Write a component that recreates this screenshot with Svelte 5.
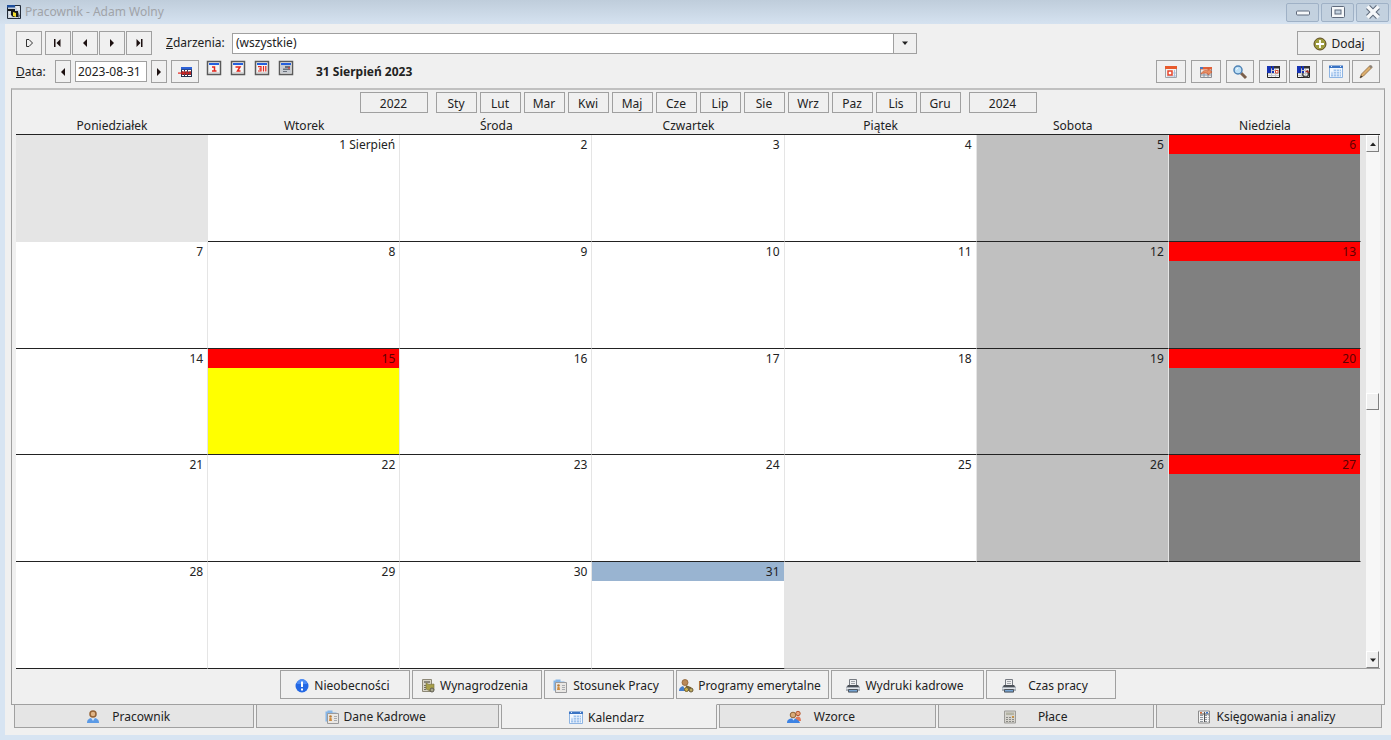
<script>
	const months = ['Sty', 'Lut', 'Mar', 'Kwi', 'Maj', 'Cze', 'Lip', 'Sie', 'Wrz', 'Paz', 'Lis', 'Gru'];
	const weekdays = ['Poniedziałek', 'Wtorek', 'Środa', 'Czwartek', 'Piątek', 'Sobota', 'Niedziela'];
	const holidays = [15];

	// august 2023 starts on a tuesday
	const firstOffset = 1;
	const daysInMonth = 31;

	let selected = $state(31);
	let date = $state('2023-08-31');
	let activeTab = $state('Kalendarz');

	const weeks = Array.from({ length: 5 }, (_, w) =>
		Array.from({ length: 7 }, (_, d) => {
			const day = w * 7 + d - firstOffset + 1;
			return day < 1 || day > daysInMonth ? null : day;
		})
	);

	const nav = [
		{ icon: 'outline', label: 'Bieżący' },
		{ icon: 'first', label: 'Pierwszy' },
		{ icon: 'left', label: 'Poprzedni' },
		{ icon: 'right', label: 'Następny' },
		{ icon: 'last', label: 'Ostatni' }
	];

	const views = [
		{ icon: 'view1', label: 'Dzień' },
		{ icon: 'view7', label: 'Tydzień' },
		{ icon: 'view31', label: 'Miesiąc' },
		{ icon: 'viewList', label: 'Lista' }
	];

	const tools = [
		{ groups: ['calRed'], wide: true },
		{ groups: ['calCross'], wide: true },
		{ groups: ['search'] },
		{ groups: ['gridInfo', 'gridMove'] },
		{ groups: ['calendar', 'pencil'] }
	];

	const actions = [
		{ label: 'Nieobecności', icon: 'alert', text: 76, width: 130 },
		{ label: 'Wynagrodzenia', icon: 'money', text: 88, width: 130 },
		{ label: 'Stosunek Pracy', icon: 'card', text: 88, width: 130 },
		{ label: 'Programy emerytalne', icon: 'pension', text: 0, width: 153 },
		{ label: 'Wydruki kadrowe', icon: 'printer', text: 98, width: 153 },
		{ label: 'Czas pracy', icon: 'printer', text: 74, width: 130 }
	];

	const tabs = [
		{ label: 'Pracownik', icon: 'person', text: 72, grow: 241 },
		{ label: 'Dane Kadrowe', icon: 'card', text: 0, grow: 243 },
		{ label: 'Kalendarz', icon: 'calendar', text: 0, grow: 216 },
		{ label: 'Wzorce', icon: 'people', text: 57, grow: 216 },
		{ label: 'Płace', icon: 'calc', text: 62, grow: 216 },
		{ label: 'Księgowania i analizy', icon: 'report', text: 0, grow: 226 }
	];

	function dayClass(day, col) {
		if (day === null) return 'empty';
		if (day === selected) return 'selected';
		if (holidays.includes(day)) return 'holiday';
		if (col === 6) return 'sunday';
		if (col === 5) return 'saturday';
		return '';
	}
</script>

{#snippet icon(name)}
	<svg class="icon" viewBox="0 0 16 16" width="16" height="16" aria-hidden="true">
		{#if name === 'outline'}
			<path d="M5.500 4.500h2.500l3.500 3.500-3.500 3.500H5.500z" fill="none" stroke="#333" />
		{:else if name === 'first'}
			<path d="M4 4h1.500v8H4zM10.500 4v8L6.500 8z" fill="#1c1010" />
		{:else if name === 'left'}
			<path d="M10 4v8L6 8z" fill="#1c1010" />
		{:else if name === 'right'}
			<path d="M6 4v8l4-4z" fill="#1c1010" />
		{:else if name === 'last'}
			<path d="M10 4h1.500v8h-1.500zM5.500 4v8l4-4z" fill="#1c1010" />
		{:else if name === 'up'}
			<path d="M5 10h6L8 6.500z" fill="#222" />
		{:else if name === 'down'}
			<path d="M5 6.500h6L8 10z" fill="#222" />
		{:else if name === 'app'}
			<path d="M1.500 1.500h13v13h-13z" fill="#c9d2dc" stroke="#222b38" />
			<path d="M1 1h8v2.500H1z" fill="#1f4f9c" />
			<path d="M2 5h7v2h3v6H7l-2-2V7H2z" fill="#16181c" />
			<path d="M7 8l3 1v4l-3-1z" fill="#f2dd2c" />
			<path d="M10 3h3M11 5h3M3 9h1M3 12h2" stroke="#fff" />
			<path d="M12 8l2 4-2 2z" fill="#5b6673" />
		{:else if name === 'today'}
			<path d="M4 3h11v10H4z" fill="#26324f" />
			<path d="M4 3h11v2.500H4z" fill="#2d62d8" />
			<path d="M5 6h2v1.500H5zM8 6h2v1.500H8zM11 6h3v1.500h-3zM5 11h2v1H5zM8 11h2v1H8zM11 11h3v1h-3z" fill="#fff" />
			<path d="M1 8.500h13v1.200H1z" fill="#e8231a" />
			<path d="M5 7l3 4M8 7l-3 4M10 7v4M13 7v4" stroke="#e8231a" />
		{:else if name.startsWith('view')}
			<path d="M1.500 1.500h13v13h-13z" fill="#f4f4f4" stroke="#5a5a5a" stroke-width="1.500" />
			<path d="M3 3h10v2H3z" fill="#2560dd" />
			<path d="M3 13h10" stroke="#b9b9b9" />
			{#if name === 'view1'}
				<path d="M6 7h2.500v4M6 11h4.500" fill="none" stroke="#e3261c" stroke-width="1.500" />
			{:else if name === 'view7'}
				<path d="M5.500 7h4.500L7.500 11h3" fill="none" stroke="#e3261c" stroke-width="1.500" />
			{:else if name === 'view31'}
				<path d="M4 6.700h3v4.300H4M5 9h2M9.500 6v5.500M11.800 6v5.500" fill="none" stroke="#e3261c" stroke-width="1.200" />
			{:else}
				<path d="M3 5h10v8H3z" fill="#c8ccd2" />
				<path d="M7 6h5v2H7zM5 8.500h7V10H5zM5 11h4v1H5z" fill="#6a717b" />
				<path d="M10 7.500h2v1h-2z" fill="#e3261c" />
			{/if}
		{:else if name === 'calRed'}
			<path d="M2.500 2.500h11v11h-11z" fill="#f5f4f2" stroke="#a0a4aa" />
			<path d="M2 2h12v3H2z" fill="#e85a2c" />
			<path d="M11.500 6v7M4 12h9M10 9h3" stroke="#aebfdc" />
			<path d="M5 7h4v4H5z" fill="#fff" stroke="#e8452c" stroke-width="1.500" />
		{:else if name === 'calCross'}
			<path d="M2.500 3.500h11v10h-11z" fill="#eeeae5" stroke="#8c8f96" />
			<path d="M2 3h12v2.500H2z" fill="#e06038" />
			<path d="M2 3h3v2H2z" fill="#4a79c0" />
			<path d="M3 11h10M6 9v4M10 9v4" stroke="#8794a8" />
			<path d="M3 10c2-4 5-4 7-3V4.500L14 8l-4 3V9.500c-3-1-5-.5-7 .5z" fill="#e99066" stroke="#c5532b" stroke-width=".7" />
		{:else if name === 'search'}
			<path d="M9 9l5 5" stroke="#7b604c" stroke-width="3" />
			<circle cx="6" cy="6" r="4" fill="#bfe0f6" stroke="#4f83b5" stroke-width="1.500" />
			<path d="M4 5.500l2-1.500" stroke="#fff" />
		{:else if name === 'gridInfo' || name === 'gridMove'}
			<path d="M2.500 2.500h12v11h-12z" fill="#f2f2f2" stroke="#222" />
			<path d="M6 6.500h8M3 9.500h11M3 11.500h11M6.500 5v8M10.500 5v8" stroke="#c3c6ca" />
			<path d="M2 2h13v2.500H2z" fill="#333" />
			<path d="M2 2h4v7H2zM7 2h2v4H7zM7 7h2v2H7z" fill="#1632b4" />
			{#if name === 'gridInfo'}
				<path d="M10.500 6.500h2.500v2.500h-2.500z" fill="#fff" stroke="#d9482c" />
			{:else}
				<path d="M8 9c-1 3 1 4 3 4s3-2 2-5" fill="none" stroke="#444" stroke-width="1.500" />
				<path d="M10 8l2.500-2L15 9z" fill="#a32b22" />
			{/if}
		{:else if name === 'calendar'}
			<path d="M1.500 2.500h13v11h-13z" fill="#f3f8fe" stroke="#8eb4e2" />
			<path d="M1 1.500h14v2.500H1z" fill="#3b74c4" />
			<path d="M3 2.500h1M12 2.500h1" stroke="#dceaff" />
			<path d="M5 5.500h8v7H3v-4h2z" fill="#9fc2ec" />
			<path d="M3 7.500h11M3 10h11M5.500 5v8M8.500 5v8M11.500 5v8" stroke="#e4effd" stroke-width=".8" />
		{:else if name === 'pencil'}
			<path d="M2 14l1.500-4 8.500-8.500 2 2L5.500 12z" fill="#dcae6c" stroke="#8a673f" stroke-width=".8" />
			<path d="M2 14l1-2.500 1.500 1.200z" fill="#333" />
			<path d="M11 2.500l2-1.500 1.500 1.500-1.500 2z" fill="#8a8178" />
		{:else if name === 'add'}
			<circle cx="8" cy="8" r="6" fill="#9d9a3c" stroke="#5d4a24" />
			<path d="M8 4v8M4 8h8" stroke="#fff" stroke-width="1.800" />
		{:else if name === 'alert'}
			<circle cx="8" cy="8" r="6.500" fill="#2468e4" />
			<path d="M3 6a5 5 0 0 1 10 0z" fill="#4d8cf5" />
			<path d="M8 3.500v5.500M8 10.500v2" stroke="#fff" stroke-width="2" />
		{:else if name === 'money'}
			<path d="M2.500 1.500h9v12h-9z" fill="#d8d4c8" stroke="#8d8877" />
			<path d="M4 3h6v2H4z" fill="#8b877c" />
			<path d="M4 7h2v1H4zM4 9h2v1H4zM4 11h2v1H4z" fill="#716d60" />
			<path d="M6 5l3 1.500 5-.5v6l-4 1-4-2z" fill="#a9a04a" stroke="#77713c" stroke-width=".6" />
			<circle cx="12" cy="12" r="2" fill="#aaa98f" stroke="#5d5b50" />
		{:else if name === 'card'}
			<path d="M1.500 2.500h2v-1h5v2h4v9h-11z" fill="#85b6e8" />
			<path d="M3.500 4.500h11v10h-11z" fill="#e9e7e4" stroke="#9a9a9c" />
			<circle cx="6.500" cy="7.500" r="1.300" fill="#bb7b32" />
			<path d="M5 12l.5-3h2l.5 3z" fill="#d08b3c" />
			<path d="M10 7.500h3M10 9.500h3M10 11.500h3" stroke="#a8abb0" />
		{:else if name === 'pension'}
			<circle cx="7" cy="4.500" r="3" fill="#bb8a58" stroke="#8d6033" stroke-width=".8" />
			<path d="M1 13c0-3 2-5 6-5s5 2 5 5z" fill="#477fca" />
			<path d="M5 8h4l-2 3z" fill="#f4e9d8" />
			<circle cx="8.500" cy="11.500" r="2" fill="#c8b04b" stroke="#77602a" />
			<circle cx="13" cy="12" r="2" fill="#bdaa62" stroke="#675735" />
			<path d="M8 8l5 2" stroke="#77602a" stroke-width="1.500" />
		{:else if name === 'printer'}
			<path d="M4.500 1.500h7v6h-7z" fill="#eeeeef" stroke="#777b82" />
			<path d="M6 3.500h4M6 5.500h4" stroke="#a0a3a8" />
			<path d="M3 7h10l2 2v4h-2v1.500H3V13H1V9z" fill="#a9afb7" />
			<path d="M3 7h10l1 2H2z" fill="#4b5057" />
			<path d="M1.500 10.500h13" stroke="#e3e6ea" />
			<path d="M3.500 11.500h9v2.500h-9z" fill="#75a4d4" stroke="#50565e" />
		{:else if name === 'person'}
			<path d="M2 14c0-3 1.500-5 6-5s6 2 6 5z" fill="#5b9ae6" />
			<path d="M6 9h4l-2 3z" fill="#d5e5f8" />
			<circle cx="8" cy="5" r="3" fill="#dfb486" stroke="#936236" stroke-width="1.500" />
		{:else if name === 'people'}
			<circle cx="12" cy="4.500" r="2.200" fill="#eaa379" stroke="#b4562f" />
			<path d="M9 12c0-3 1-4.500 3-4.500s3 2 3 4.500z" fill="#df795a" />
			<circle cx="7" cy="6" r="2.800" fill="#d9aa77" stroke="#906336" />
			<path d="M1 14c0-3 1.500-4.500 5.500-4.500S13 11 14 14z" fill="#3d83e4" />
			<path d="M6 9.500h3l-1.500 2z" fill="#dce9fa" />
		{:else if name === 'calc'}
			<path d="M2.500 2h11v12h-11z" fill="#d6d4ce" stroke="#9d9c98" />
			<path d="M4 3.500h8v2.500H4z" fill="#b3b3a4" />
			<path d="M4 8.500h8M4 10.500h8M4 12.500h8" stroke="#8a8a86" stroke-dasharray="2 1" />
			<path d="M10 7h2v1.500h-2z" fill="#d69638" />
		{:else if name === 'report'}
			<path d="M2.500 2h11v12h-11z" fill="#f4f4f4" stroke="#8b8b8b" />
			<path d="M4 6.500h8.500M4 8.500h8.500M4 10.500h8.500M4 12.500h8.500" stroke="#8f959d" stroke-dasharray="3 1" />
			<path d="M8.500 3v10M4 5h9" stroke="#555" />
			<path d="M4 3h2v1.500H4z" fill="#d66a35" />
			<path d="M10 3h2v1.500h-2z" fill="#3d76cc" />
		{/if}
	</svg>
{/snippet}

<div class="window">
	<header class="titlebar">
		{@render icon('app')}
		<span class="title">Pracownik - Adam Wolny</span>
		<button class="win" aria-label="Minimalizuj">
			<svg viewBox="0 0 16 16" width="16" height="16"><rect x="1.500" y="7" width="13" height="4" rx="1" fill="#f6f8fa" stroke="#5f6a7c" /></svg>
		</button>
		<button class="win" aria-label="Maksymalizuj">
			<svg viewBox="0 0 16 16" width="16" height="16">
				<rect x="1.500" y="2.500" width="13" height="11" rx="1" fill="#f6f8fa" stroke="#5f6a7c" />
				<rect x="5" y="6" width="6" height="4" fill="#c3d1df" stroke="#5f6a7c" />
			</svg>
		</button>
		<button class="win" aria-label="Zamknij">
			<svg viewBox="0 0 16 16" width="16" height="16">
				<path d="M3 3l10 10M13 3L3 13" stroke="#5f6a7c" stroke-width="5.500" />
				<path d="M2.500 2.500l11 11M13.500 2.500l-11 11" stroke="#f6f8fa" stroke-width="3.500" />
			</svg>
		</button>
	</header>

	<main>
		<div class="bar top">
			<div class="nav">
				{#each nav as item}
					<button aria-label={item.label}>{@render icon(item.icon)}</button>
				{/each}
			</div>
			<label for="events"><u>Z</u>darzenia:</label>
			<div class="combo">
				<select id="events">
					<option>(wszystkie)</option>
				</select>
				<span class="arrow">{@render icon('down')}</span>
			</div>
			<button class="add">{@render icon('add')} Dodaj</button>
		</div>

		<div class="bar second">
			<label for="date"><u>D</u>ata:</label>
			<button class="step" aria-label="Poprzedni dzień">{@render icon('left')}</button>
			<input id="date" type="text" bind:value={date} />
			<button class="step" aria-label="Następny dzień">{@render icon('right')}</button>
			<button class="tool" aria-label="Dzisiaj">{@render icon('today')}</button>
			<div class="views">
				{#each views as view}
					<button aria-label={view.label}>{@render icon(view.icon)}</button>
				{/each}
			</div>
			<strong>31 Sierpień 2023</strong>
			<div class="tools">
				{#each tools as tool}
					<div class="group">
						{#each tool.groups as name}
							<button class="tool" class:wide={tool.wide} aria-label={name}>{@render icon(name)}</button>
						{/each}
					</div>
				{/each}
			</div>
		</div>

		<section class="panel">
			<div class="months">
				<button class="year">2022</button>
				<div class="month-list">
					{#each months as month}
						<button>{month}</button>
					{/each}
				</div>
				<button class="year">2024</button>
			</div>

			<div class="calendar">
				<table>
					<thead>
						<tr>
							{#each weekdays as name}
								<th>{name}</th>
							{/each}
						</tr>
					</thead>
					<tbody>
						{#each weeks as week}
							<tr>
								{#each week as day, col}
									<td class={dayClass(day, col)}>
										{#if day}
											<div class="day">{day}{day === 1 ? ' Sierpień' : ''}</div>
										{/if}
									</td>
								{/each}
							</tr>
						{/each}
					</tbody>
				</table>
				<div class="scroll">
					<div class="track">
						<button aria-label="W górę">{@render icon('up')}</button>
						<div class="space"></div>
						<div class="thumb"></div>
						<div class="space"></div>
						<button aria-label="W dół">{@render icon('down')}</button>
					</div>
				</div>
			</div>

			<div class="actions">
				{#each actions as action}
					<button style="width: {action.width}px">
						{@render icon(action.icon)}
						<span style="min-width: {action.text}px">{action.label}</span>
					</button>
				{/each}
			</div>
		</section>

		<nav class="tabs">
			{#each tabs as tab}
				<button
					class:active={activeTab === tab.label}
					style="flex-grow: {tab.grow}"
					onclick={() => (activeTab = tab.label)}
				>
					{@render icon(tab.icon)}
					<span style="min-width: {tab.text}px">{tab.label}</span>
				</button>
			{/each}
		</nav>
	</main>
</div>

<style>
	:global(body) {
		margin: 0;
		background: #d7e4f2;
	}

	.window {
		box-sizing: border-box;
		min-height: 100vh;
		padding: 0 0 5px 5px;
		background: #d7e4f2;
		color: #222;
		font-family: 'Noto Sans', 'Open Sans', sans-serif;
		font-size: 12px;
		line-height: 16px;
	}

	.window * {
		box-sizing: border-box;
	}

	button,
	input,
	select {
		margin: 0;
		padding: 0;
		border: 1px solid #a0a0a0;
		border-radius: 0;
		background: #f0f0f0;
		color: inherit;
		font: inherit;
	}

	button {
		display: flex;
		align-items: center;
		justify-content: center;
	}

	.icon {
		display: block;
		flex: none;
	}

	.titlebar {
		display: flex;
		align-items: center;
		gap: 2px;
		height: 24px;
		margin-left: -5px;
		padding: 0 2px 0 6px;
		background: linear-gradient(#bfcddb, #d5e2f0);
	}

	.title {
		flex: 1;
		padding-left: 1px;
		color: #a0a3a8;
	}

	.win {
		width: 33px;
		height: 19px;
		border-color: #9fb1c6;
		border-radius: 2px;
		background: #c3d1df;
	}

	main {
		padding: 7px 6px;
		background: #f0f0f0;
	}

	.bar {
		display: flex;
		align-items: center;
		margin: 0 5px 5px;
	}

	.top {
		height: 24px;
	}

	.second {
		height: 23px;
	}

	.nav {
		display: flex;
		gap: 1px;
	}

	.nav button {
		width: 26px;
		height: 24px;
	}

	.nav button:first-child {
		margin-right: 2px;
	}

	.top label {
		width: 66px;
		margin-left: 14px;
	}

	.combo {
		position: relative;
		flex: 1;
		margin-right: 380px;
	}

	select {
		display: block;
		width: 100%;
		height: 21px;
		padding-left: 3px;
		appearance: none;
		background: #fff;
	}

	.arrow {
		position: absolute;
		top: 0;
		right: 0;
		display: flex;
		align-items: center;
		justify-content: center;
		width: 24px;
		height: 21px;
		border: 1px solid #a0a0a0;
		background: #f0f0f0;
		pointer-events: none;
	}

	.add {
		gap: 3px;
		width: 83px;
		height: 24px;
		padding-top: 1px;
	}

	.second label {
		width: 39px;
	}

	.step {
		width: 16px;
		height: 23px;
	}

	input {
		width: 72px;
		height: 21px;
		margin: 0 4px;
		padding-left: 2px;
		background: #fff;
	}

	.tool {
		width: 28px;
		height: 23px;
	}

	.tool.wide {
		width: 30px;
	}

	.step + .tool {
		margin-left: 4px;
	}

	.views {
		display: flex;
		gap: 8px;
		align-self: flex-start;
		margin: 0 22px 0 7px;
	}

	.views button {
		border: 0;
	}

	.tools {
		display: flex;
		gap: 5px;
		margin-left: auto;
	}

	.group {
		display: flex;
		gap: 2px;
	}

	.panel {
		padding: 2px 4px 5px;
		border: 1px solid #a0a0a0;
		border-top: 2px solid #c0c0c0;
	}

	.months {
		display: flex;
		justify-content: center;
		gap: 8px;
		margin-bottom: 4px;
	}

	.months button {
		width: 41px;
		height: 21px;
		padding-top: 2px;
	}

	.months .year {
		width: 68px;
	}

	.month-list {
		display: flex;
		gap: 3px;
	}

	.calendar {
		display: grid;
		grid-template-columns: 1fr auto;
	}

	table {
		width: 100%;
		height: calc(100vh - 188px);
		min-height: 300px;
		table-layout: fixed;
		border-collapse: separate;
		border-spacing: 0;
	}

	th {
		height: 18px;
		padding: 1px 0 0;
		border-bottom: 1px solid #222;
		font-weight: normal;
	}

	td {
		padding: 0;
		border-right: 1px solid #e5e5e5;
		border-bottom: 1px solid #222;
		background: #fff;
		vertical-align: top;
	}

	.day {
		height: 19px;
		padding: 2px 4px 0 0;
		text-align: right;
	}

	.empty {
		border-color: #e5e5e5;
		background: #e5e5e5;
	}

	tr:last-child .empty {
		border-right: 0;
		border-bottom-color: #a0a0a0;
	}

	.saturday {
		background: #c0c0c0;
	}

	.sunday {
		background: #808080;
	}

	.holiday {
		background: #ff0;
	}

	.sunday .day,
	.holiday .day {
		background: #f00;
		color: #600000;
	}

	.selected .day {
		background: #99b4d1;
	}

	.scroll {
		display: flex;
		margin-top: 17px;
		padding-left: 5px;
		border-top: 1px solid #222;
		border-bottom: 1px solid #a0a0a0;
		background: #e5e5e5;
	}

	.track {
		display: flex;
		flex-direction: column;
		width: 14px;
		background: #f7f7f7;
	}

	.track button,
	.thumb {
		width: 13px;
		height: 17px;
		border: 1px solid #fff;
		border-right-color: #808080;
		border-bottom-color: #808080;
		background: #f0f0f0;
	}

	.space {
		flex: 1;
	}

	.actions {
		display: flex;
		justify-content: center;
		gap: 2px;
		margin-top: 1px;
	}

	.actions button {
		height: 29px;
	}

	.actions button,
	.tabs button {
		gap: 4px;
		padding: 2px 6px 0 0;
		white-space: nowrap;
	}

	.tabs {
		display: flex;
		gap: 2px;
		margin: -1px 3px 0;
	}

	.tabs button {
		flex: 1 1 0;
		height: 24px;
		background: #e5e5e5;
	}

	.tabs .active {
		height: 25px;
		margin-bottom: -1px;
		border-top-color: #f0f0f0;
		background: #f0f0f0;
	}
</style>
